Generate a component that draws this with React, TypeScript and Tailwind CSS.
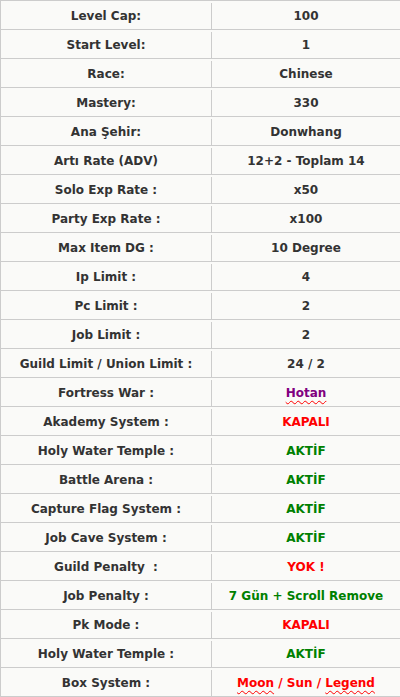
type Row = {
  label: string;
  value: string;
  tone?: "red" | "green" | "link";
};

const rows: Row[] = [
  { label: "Level Cap:", value: "100" },
  { label: "Start Level:", value: "1" },
  { label: "Race:", value: "Chinese" },
  { label: "Mastery:", value: "330" },
  { label: "Ana Şehir:", value: "Donwhang" },
  { label: "Artı Rate (ADV)", value: "12+2 - Toplam 14" },
  { label: "Solo Exp Rate :", value: "x50" },
  { label: "Party Exp Rate :", value: "x100" },
  { label: "Max Item DG :", value: "10 Degree" },
  { label: "Ip Limit :", value: "4" },
  { label: "Pc Limit :", value: "2" },
  { label: "Job Limit :", value: "2" },
  { label: "Guild Limit / Union Limit :", value: "24 / 2" },
  { label: "Fortress War :", value: "Hotan", tone: "link" },
  { label: "Akademy System :", value: "KAPALI", tone: "red" },
  { label: "Holy Water Temple :", value: "AKTİF", tone: "green" },
  { label: "Battle Arena :", value: "AKTİF", tone: "green" },
  { label: "Capture Flag System :", value: "AKTİF", tone: "green" },
  { label: "Job Cave System :", value: "AKTİF", tone: "green" },
  { label: "Guild Penalty  :", value: "YOK !", tone: "red" },
  { label: "Job Penalty :", value: "7 Gün + Scroll Remove", tone: "green" },
  { label: "Pk Mode :", value: "KAPALI", tone: "red" },
  { label: "Holy Water Temple :", value: "AKTİF", tone: "green" },
  { label: "Box System :", value: "Moon / Sun / Legend", tone: "red" },
];

const squiggle =
  "underline decoration-wavy decoration-[#ff0000] decoration-1 underline-offset-[3px]";

function Value({ row }: { row: Row }) {
  if (row.tone === "link") {
    return <span className={`text-[#800080] ${squiggle}`}>{row.value}</span>;
  }
  if (row.label === "Box System :") {
    return (
      <span className="text-[#ff0000]">
        <span className={squiggle}>Moon</span> / Sun /{" "}
        <span className={squiggle}>Legend</span>
      </span>
    );
  }
  if (row.tone === "red") return <span className="text-[#ff0000]">{row.value}</span>;
  if (row.tone === "green") return <span className="text-[#008000]">{row.value}</span>;
  return <span>{row.value}</span>;
}

export default function App() {
  return (
    <div className="h-[697px] w-[400px] overflow-hidden bg-white">
      <div
        className="w-[400px] border-l border-t border-[#cccccc] bg-[#fafaf8] text-[12px] font-bold text-[#333333]"
        style={{ fontFamily: '"DejaVu Sans", Verdana, sans-serif' }}
      >
        {rows.map((row, i) => (
          <div key={i} className="flex h-[29px] border-b border-[#cccccc] pt-[2px]">
            <div className="flex w-[211px] shrink-0 items-center justify-center border-r border-[#cccccc] whitespace-pre">
              {row.label}
            </div>
            <div className="flex flex-1 items-center justify-center whitespace-pre">
              <Value row={row} />
            </div>
          </div>
        ))}
      </div>
    </div>
  );
}
